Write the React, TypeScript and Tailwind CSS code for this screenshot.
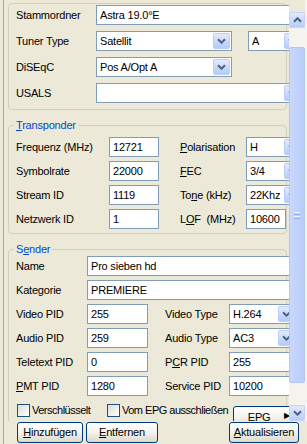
import React from 'react';

function Chevron({ up = false }: { up?: boolean }) {
    return (
        <svg width="9" height="6" viewBox="0 0 9 6" className={up ? 'rotate-180' : ''}>
            <path d="M1 1.2 L4.5 4.7 L8 1.2" fill="none" stroke="#4d6185" strokeWidth="2" />
        </svg>
    );
}

function DropButton() {
    return (
        <span className="flex h-full w-[17px] shrink-0 items-center justify-center rounded-[2px] border border-[#b9cdf8] bg-linear-to-b from-[#e2eafd] to-[#b5caf7]">
            <Chevron />
        </span>
    );
}

function TextBox({ value = '', w }: { value?: string; w: string }) {
    return (
        <div className={`${w} flex h-[20px] shrink-0 items-center border border-[#7f9db9] bg-white px-[3px] whitespace-nowrap`}>
            {value}
        </div>
    );
}

function Combo({ value = '', w }: { value?: string; w: string }) {
    return (
        <div className={`${w} flex h-[20px] shrink-0 items-stretch border border-[#7f9db9] bg-white p-[1px]`}>
            <span className="flex flex-1 items-center pl-[2px] whitespace-nowrap">{value}</span>
            <DropButton />
        </div>
    );
}

function Group({ title, children, className = '' }: { title?: React.ReactNode; children: React.ReactNode; className?: string }) {
    return (
        <fieldset className={`w-[279px] min-w-0 shrink-0 rounded-[4px] border border-[#d0d0bf] ${className}`}>
            {title && <legend className="ml-[5px] px-[2px] leading-[13px] text-[#0046d5]">{title}</legend>}
            {children}
        </fieldset>
    );
}

function XpButton({ children, w, className = '' }: { children: React.ReactNode; w: string; className?: string }) {
    return (
        <button className={`${w} ${className} flex h-[21px] shrink-0 items-center justify-center rounded-[3px] border border-[#003c74] bg-linear-to-b from-[#ffffff] via-[#f4f3ee] to-[#dcd8cc] leading-none`}>
            {children}
        </button>
    );
}

function CheckBox({ label, w }: { label: string; w: string }) {
    return (
        <label className={`${w} flex shrink-0 items-center gap-[2px] whitespace-nowrap tracking-[-0.5px]`}>
            <span className="h-[13px] w-[13px] shrink-0 border border-[#1c5180] bg-linear-to-br from-[#dcdcd7] to-[#ffffff]" />
            {label}
        </label>
    );
}

export default function App() {
    return (
        <div className="h-[444px] w-[307px] overflow-hidden bg-[#ece9d8] pl-[3px] font-['Liberation_Sans',Arial,sans-serif] text-[11px] leading-[13px] tracking-[-0.2px] text-black">
            <div className="flex h-full flex-col border-l border-[#aca899]">
                <div className="flex h-[421px] shrink-0">
                    {/* scrolled content panel */}
                    <div className="flex w-[285px] shrink-0 flex-col overflow-hidden pl-[4px] pt-[3px]">
                        <Group>
                            <div className="flex flex-col gap-[6px] pb-[6px] pl-[7px] pt-[1px]">
                                <div className="flex items-center">
                                    <span className="w-[80px] shrink-0">Stammordner</span>
                                    <TextBox w="w-[204px]" value="Astra 19.0°E" />
                                </div>
                                <div className="flex items-center">
                                    <span className="w-[80px] shrink-0">Tuner Type</span>
                                    <Combo w="w-[136px]" value="Satellit" />
                                    <span className="w-[16px] shrink-0" />
                                    <Combo w="w-[55px]" value="A" />
                                </div>
                                <div className="flex items-center">
                                    <span className="w-[80px] shrink-0">DiSEqC</span>
                                    <Combo w="w-[136px]" value="Pos A/Opt A" />
                                </div>
                                <div className="flex items-center">
                                    <span className="w-[80px] shrink-0">USALS</span>
                                    <Combo w="w-[207px]" />
                                </div>
                            </div>
                        </Group>

                        <Group className="mt-[9px]" title={<><u>T</u>ransponder</>}>
                            <div className="flex flex-col gap-[4px] pb-[4px] pl-[7px] pt-[5px]">
                                <div className="flex items-center">
                                    <span className="w-[93px] shrink-0">Frequenz (MHz)</span>
                                    <TextBox w="w-[50px]" value="12721" />
                                    <span className="ml-[21px] w-[66px] shrink-0"><u>P</u>olarisation</span>
                                    <Combo w="w-[57px]" value="H" />
                                </div>
                                <div className="flex items-center">
                                    <span className="w-[93px] shrink-0">Symbolrate</span>
                                    <TextBox w="w-[50px]" value="22000" />
                                    <span className="ml-[21px] w-[66px] shrink-0"><u>F</u>EC</span>
                                    <Combo w="w-[57px]" value="3/4" />
                                </div>
                                <div className="flex items-center">
                                    <span className="w-[93px] shrink-0">Stream ID</span>
                                    <TextBox w="w-[50px]" value="1119" />
                                    <span className="ml-[21px] w-[66px] shrink-0">To<u>n</u>e (kHz)</span>
                                    <Combo w="w-[57px]" value="22Khz" />
                                </div>
                                <div className="flex items-center">
                                    <span className="w-[93px] shrink-0">Netzwerk ID</span>
                                    <TextBox w="w-[50px]" value="1" />
                                    <span className="ml-[21px] w-[66px] shrink-0 whitespace-pre">L<u>O</u>F  (MHz)</span>
                                    <TextBox w="w-[40px]" value="10600" />
                                </div>
                            </div>
                        </Group>

                        <Group className="mt-[9px] h-[200px]" title={<>S<u>e</u>nder</>}>
                            <div className="flex flex-col gap-[4px] pl-[7px]">
                                <div className="flex items-center">
                                    <span className="w-[71px] shrink-0">Name</span>
                                    <TextBox w="w-[213px]" value="Pro sieben hd" />
                                </div>
                                <div className="flex items-center">
                                    <span className="w-[71px] shrink-0">Kategorie</span>
                                    <TextBox w="w-[213px]" value="PREMIERE" />
                                </div>
                                <div className="flex items-center">
                                    <span className="w-[71px] shrink-0">Video PID</span>
                                    <TextBox w="w-[61px]" value="255" />
                                    <span className="ml-[17px] w-[64px] shrink-0">Video Type</span>
                                    <Combo w="w-[68px]" value="H.264" />
                                </div>
                                <div className="flex items-center">
                                    <span className="w-[71px] shrink-0">Audio PID</span>
                                    <TextBox w="w-[61px]" value="259" />
                                    <span className="ml-[17px] w-[64px] shrink-0">Audio Type</span>
                                    <Combo w="w-[68px]" value="AC3" />
                                </div>
                                <div className="flex items-center">
                                    <span className="w-[71px] shrink-0">Teletext PID</span>
                                    <TextBox w="w-[61px]" value="0" />
                                    <span className="ml-[17px] w-[64px] shrink-0">P<u>C</u>R PID</span>
                                    <TextBox w="w-[70px]" value="255" />
                                </div>
                                <div className="flex items-center">
                                    <span className="w-[71px] shrink-0"><u>P</u>MT PID</span>
                                    <TextBox w="w-[61px]" value="1280" />
                                    <span className="ml-[17px] w-[64px] shrink-0">Service PID</span>
                                    <TextBox w="w-[70px]" value="10200" />
                                </div>
                                <div className="flex h-[20px] items-center pl-[1px]">
                                    <CheckBox w="w-[90px]" label="Verschlüsselt" />
                                    <CheckBox w="w-[126px]" label="Vom EPG ausschließen" />
                                    <XpButton w="w-[60px]" className="mt-[6px] h-[22px] self-start items-start pt-[5px]">
                                        <span className="flex-1 text-center">EPG</span>
                                        <span className="pr-[2px] text-[8px]">▶</span>
                                    </XpButton>
                                </div>
                            </div>
                        </Group>
                    </div>

                    {/* vertical scrollbar */}
                    <div className="flex w-[16px] shrink-0 flex-col pt-[12px]">
                        <div className="flex h-[16px] items-center justify-center rounded-[2px] border border-[#c3d3fd] bg-linear-to-b from-[#e2eafd] to-[#b8ccf8]">
                            <Chevron up />
                        </div>
                        <div className="flex flex-1 flex-col bg-[#f4f3ee]">
                            <div className="mt-[19px] flex h-[336px] flex-col items-center justify-center gap-[1px] rounded-[2px] border border-[#b4c8f6] bg-linear-to-r from-[#c9d8fc] to-[#b9cdf9]">
                                <span className="h-[1px] w-[6px] bg-[#eef4fe]" />
                                <span className="h-[1px] w-[6px] bg-[#8cb0f8]" />
                                <span className="h-[1px] w-[6px] bg-[#eef4fe]" />
                                <span className="h-[1px] w-[6px] bg-[#8cb0f8]" />
                            </div>
                        </div>
                        <div className="flex h-[16px] items-center justify-center rounded-[2px] border border-[#c3d3fd] bg-linear-to-b from-[#e2eafd] to-[#b8ccf8]">
                            <Chevron />
                        </div>
                    </div>
                    <div className="w-[2px] shrink-0 bg-[#f5f4ef]" />
                </div>

                {/* dialog buttons */}
                <div className="flex items-start pl-[13px] pt-[1px]">
                    <XpButton w="w-[66px]"><span><u>H</u>inzufügen</span></XpButton>
                    <XpButton w="w-[72px]" className="ml-[3px]"><span><u>E</u>ntfernen</span></XpButton>
                    <XpButton w="w-[70px]" className="ml-[71px]"><span><u>A</u>ktualisieren</span></XpButton>
                </div>
            </div>
        </div>
    );
}
